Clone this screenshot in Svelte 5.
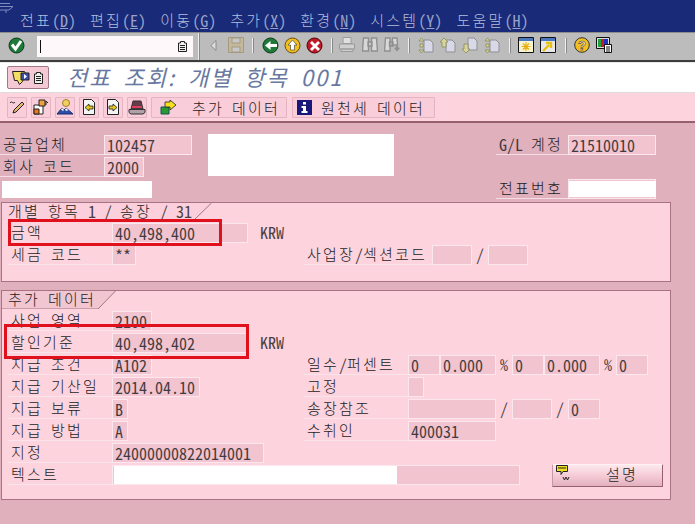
<script>
  const split = (s) => s.match(/[가-힣]+|[^가-힣]+/g) ?? [];
  const isKo = (r) => /[가-힣]/.test(r);

  const menu = [['전표', 'D'], ['편집', 'E'], ['이동', 'G'], ['추가', 'X'], ['환경', 'N'], ['시스템', 'Y'], ['도움말', 'H']];

  // c = column (8px units), w = span, r = row
  const top = [
    { t: 'l', x: '공급업체', c: 0, w: 13, r: 1 }, { t: 'f', x: '102457', c: 13, w: 11, r: 1 },
    { t: 'l', x: 'G/L 계정', c: 62, w: 9, r: 1 }, { t: 'f', x: '21510010', c: 71, w: 11, r: 1 },
    { t: 'l', x: '회사 코드', c: 0, w: 13, r: 2 }, { t: 'f', x: '2000', c: 13, w: 5, r: 2 },
    { t: 'l', x: '전표번호', c: 62, w: 9, r: 3 },
  ];
  const box1 = [
    { t: 'p', x: '금액', c: 1, w: 13, r: 1 }, { t: 'f', x: '40,498,400', c: 14, w: 17, r: 1 }, { t: 'u', x: 'KRW', c: 32, w: 4, r: 1 },
    { t: 'l', x: '세금 코드', c: 1, w: 13, r: 2 }, { t: 'f', x: '**', c: 14, w: 3, r: 2 },
    { t: 'l', x: '사업장/섹션코드', c: 38, w: 16, r: 2 }, { t: 'f', x: '', c: 54, w: 5, r: 2 }, { t: 'u', x: '/', c: 59, w: 2, r: 2 }, { t: 'f', x: '', c: 61, w: 5, r: 2 },
  ];
  const box2 = [
    { t: 'l', x: '사업 영역', c: 1, w: 13, r: 1 }, { t: 'f', x: '2100', c: 14, w: 5, r: 1 },
    { t: 'l', x: '할인기준', c: 1, w: 13, r: 2 }, { t: 'f', x: '40,498,402', c: 14, w: 17, r: 2 }, { t: 'u', x: 'KRW', c: 32, w: 4, r: 2 },
    { t: 'l', x: '지급 조건', c: 1, w: 13, r: 3 }, { t: 'f', x: 'A102', c: 14, w: 5, r: 3 },
    { t: 'l', x: '일수/퍼센트', c: 38, w: 13, r: 3 }, { t: 'f', x: '0', c: 51, w: 4, r: 3 }, { t: 'f', x: '0.000', c: 55, w: 7, r: 3 }, { t: 'u', x: '%', c: 62, w: 2, r: 3 },
    { t: 'f', x: '0', c: 64, w: 4, r: 3 }, { t: 'f', x: '0.000', c: 68, w: 7, r: 3 }, { t: 'u', x: '%', c: 75, w: 2, r: 3 }, { t: 'f', x: '0', c: 77, w: 4, r: 3 },
    { t: 'l', x: '지급 기산일', c: 1, w: 13, r: 4 }, { t: 'f', x: '2014.04.10', c: 14, w: 11, r: 4 },
    { t: 'l', x: '고정', c: 38, w: 13, r: 4 }, { t: 'f', x: '', c: 51, w: 2, r: 4 },
    { t: 'l', x: '지급 보류', c: 1, w: 13, r: 5 }, { t: 'f', x: 'B', c: 14, w: 2, r: 5 },
    { t: 'l', x: '송장참조', c: 38, w: 13, r: 5 }, { t: 'f', x: '', c: 51, w: 11, r: 5 }, { t: 'u', x: '/', c: 62, w: 2, r: 5 }, { t: 'f', x: '', c: 64, w: 5, r: 5 }, { t: 'u', x: '/', c: 69, w: 2, r: 5 }, { t: 'f', x: '0', c: 71, w: 4, r: 5 },
    { t: 'l', x: '지급 방법', c: 1, w: 13, r: 6 }, { t: 'f', x: 'A', c: 14, w: 2, r: 6 },
    { t: 'l', x: '수취인', c: 38, w: 13, r: 6 }, { t: 'f', x: '400031', c: 51, w: 11, r: 6 },
    { t: 'l', x: '지정', c: 1, w: 13, r: 7 }, { t: 'f', x: '24000000822014001', c: 14, w: 19, r: 7 },
    { t: 'l', x: '텍스트', c: 1, w: 13, r: 8 }, { t: 'f', x: '', c: 14, w: 51, r: 8 },
  ];
  const place = (it) => `grid-column:${it.c + 1}/span ${it.w};grid-row:${it.r}`;
</script>

{#snippet txt(s)}{#each split(s) as r}<span class={isKo(r) ? 'ko' : 'la'}>{r}</span>{/each}{/snippet}

{#snippet cells(list)}
  {#each list as it}
    <div class={it.t === 'l' ? 'label' : it.t === 'p' ? 'plain' : it.t === 'f' ? 'field' : 'unit'} style={place(it)}>{@render txt(it.x)}</div>
  {/each}
{/snippet}

<div class="app">
  <header class="menubar">
    <svg class="winicon" width="16" height="12" viewBox="0 0 16 12"><path d="M0 1.500H10M0 4.500H13L9 8H0M6 8V11" fill="none" stroke="#7f8cc0"/></svg>
    <nav class="menus">
      {#each menu as [k, h]}
        <span class="menu"><span class="ko">{k}</span><span class="la">(</span><span class="la und">{h}</span><span class="la">)</span></span>
      {/each}
    </nav>
  </header>

  <div class="systool">
    <svg class="ic" width="17" height="17" viewBox="0 0 17 17"><circle cx="8.500" cy="8.500" r="7.500" fill="#1f7a3a" stroke="#0c3a1a"/><path d="M4 7.500l3.500 4.500 5.500-8" fill="none" stroke="#fff" stroke-width="3"/></svg>
    <div class="cmd">
      <span class="caret"></span>
      <svg width="9" height="11" viewBox="0 0 9 11"><path d="M2.500.5h4v1.500h2v8.500H.5V2h2z" fill="#eee" stroke="#222"/><path d="M2 4.500h5M2 6.500h5M2 8.500h5" stroke="#222"/></svg>
    </div>
    <i class="sep s1"></i>
    <svg class="g1" width="7" height="11" viewBox="0 0 7 11"><path d="M6 .5v10L.8 5.500z" fill="#ddd" stroke="#8a8a8a"/></svg>
    <svg class="g2" width="16" height="16" viewBox="0 0 16 16"><path d="M.5.5h15v15H.5z" fill="#c4b89c" stroke="#a49a82"/><path d="M4 1h8v5H4zM4 10h8v5H4z" fill="#c8c8c8" stroke="#a49a82"/></svg>
    <i class="sep s2"></i>
    <svg class="g3" width="17" height="17" viewBox="0 0 17 17"><circle cx="8.500" cy="8.500" r="7.500" fill="#1f7a3a" stroke="#0c3a1a"/><path d="M3 8.500L8.500 4v3H15v3H8.500v3z" fill="#fff"/></svg>
    <svg class="g4" width="17" height="17" viewBox="0 0 17 17"><circle cx="8.500" cy="8.500" r="7.500" fill="#f0c020" stroke="#6a4a08"/><path d="M8.500 3L13 8h-2.500v5h-4V8H4z" fill="#fff" stroke="#333" stroke-width=".6"/></svg>
    <svg class="g5" width="17" height="17" viewBox="0 0 17 17"><circle cx="8.500" cy="8.500" r="7.500" fill="#c01a2a" stroke="#500"/><path d="M5 5l8 8M13 5l-8 8" stroke="#fff" stroke-width="2.800"/></svg>
    <i class="sep s3"></i>
    <svg class="g6" width="16" height="15" viewBox="0 0 16 15"><path d="M4 .5h8v6H4z" fill="#e0e0e0" stroke="#9a9a9a"/><path d="M.5 7h15v5H.5zM2 12h12v2.500H2z" fill="#cfcfcf" stroke="#9a9a9a"/></svg>
    <svg class="g7" width="16" height="15" viewBox="0 0 16 15"><path d="M1.500 1h5v13h-6zM9.500 1h5l1 13h-6zM6 5h4v4H6z" fill="#d8d8d8" stroke="#8f8f8f" stroke-width="1.400"/></svg>
    <svg class="g8" width="17" height="15" viewBox="0 0 17 15"><path d="M1.500 1h4.500v13H.5zM8.500 1H13l.5 7H8zM5.500 5h3.500v4H5.500z" fill="#d8d8d8" stroke="#8f8f8f" stroke-width="1.400"/><path d="M13 9v5M10.500 11.500h5" stroke="#8f8f8f" stroke-width="2"/></svg>
    <i class="sep s4"></i>
    <svg class="g9" width="16" height="17" viewBox="0 0 16 17"><path d="M6 3h6l3 3v9H6z" fill="#d8d8e8" stroke="#8f8f8f"/><path d="M3.500 1L6 4H1zM3.500 16L6 13H1zM2 7h3v3H2z" fill="#d8d49c" stroke="#8a8a5a" stroke-width=".8"/></svg>
    <svg class="g10" width="16" height="17" viewBox="0 0 16 17"><path d="M6 3h6l3 3v9H6z" fill="#d8d8e8" stroke="#8f8f8f"/><path d="M4 1L8 5H6v5H2V5H0z" fill="#d8d49c" stroke="#8a8a5a" stroke-width=".8"/></svg>
    <svg class="g11" width="16" height="17" viewBox="0 0 16 17"><path d="M6 1h6l3 3v9H6z" fill="#d8d8e8" stroke="#8f8f8f"/><path d="M4 16L8 12H6V7H2v5H0z" fill="#d8d49c" stroke="#8a8a5a" stroke-width=".8"/></svg>
    <svg class="g12" width="16" height="17" viewBox="0 0 16 17"><path d="M6 3h6l3 3v9H6z" fill="#d8d8e8" stroke="#8f8f8f"/><path d="M3.500 1L6 4H1zM3.500 16L6 13H1zM2 7h3v3H2z" fill="#d8d49c" stroke="#8a8a5a" stroke-width=".8"/></svg>
    <i class="sep s5"></i>
    <svg class="g13" width="16" height="16" viewBox="0 0 16 16"><path d="M.5.5h15v15H.5z" fill="#f8f4d0" stroke="#111"/><path d="M1 1h14v3H1z" fill="#4a78c0"/><path d="M8 5v9M3.500 9.500h9M5 6.500l6 6M11 6.500l-6 6" stroke="#e8b010" stroke-width="1.200"/></svg>
    <svg class="g14" width="16" height="16" viewBox="0 0 16 16"><path d="M.5.5h15v15H.5z" fill="#e8e8e8" stroke="#111"/><path d="M1 1h14v3H1z" fill="#4a78c0"/><path d="M3 14l6-6M6 6h5v5" fill="none" stroke="#e8c010" stroke-width="2.400"/></svg>
    <i class="sep s6"></i>
    <svg class="g15" width="16" height="16" viewBox="0 0 16 16"><circle cx="8" cy="8" r="7.300" fill="#f0c020" stroke="#333"/><text x="8" y="13" class="q">?</text></svg>
    <svg class="g16" width="16" height="16" viewBox="0 0 16 16"><path d="M.5.500h13v11H.5z" fill="#ddd" stroke="#111"/><path d="M2 2h3v8H2z" fill="#20a040"/><path d="M5 2h3v8H5z" fill="#c02020"/><path d="M8 2h4v8H8z" fill="#2030c0"/><path d="M8.500 7.500h7v8h-7z" fill="#fff" stroke="#111"/><path d="M10 10h4M10 12h4M10 14h4" stroke="#111"/></svg>
  </div>

  <div class="titlebar">
    <button class="tbtn" aria-label="메뉴">
      <svg width="18" height="16" viewBox="0 0 18 16"><path d="M.5 1.500h12l2 4-2 1-2 5-3 3-2-4h-3z" fill="#f4e060" stroke="#222"/><path d="M9 3h8v7H9z" fill="#3a50b0" stroke="#222"/><path d="M12 4l3 2.500-3 2.500z" fill="#fff"/></svg>
      <svg width="9" height="12" viewBox="0 0 9 12"><path d="M2.500.5h4v1.500h2v9.500H.5V2h2z" fill="#eee" stroke="#222"/><path d="M2 4.500h5M2 6.500h5M2 8.500h5" stroke="#222"/></svg>
    </button>
    <h1 class="title">전표 조회: 개별 항목 001</h1>
  </div>

  <div class="apptool">
    <button class="ib" aria-label="수정"><svg width="16" height="16" viewBox="0 0 16 16"><path d="M1 4c2-3 3 2 5-1" fill="none" stroke="#222"/><path d="M4 14l1-3 8-8 2 2-8 8z" fill="#e8b878" stroke="#222"/></svg></button>
    <button class="ib" aria-label="개요"><svg width="16" height="16" viewBox="0 0 16 16"><path d="M1 6h9v9H1z" fill="#fff" stroke="#222"/><path d="M1 10h5v5H1z" fill="#e87818" stroke="#222"/><path d="M6 1h6v6H6z" fill="#f0a040" stroke="#222"/><path d="M13 6V2l2 2" fill="none" stroke="#222"/></svg></button>
    <button class="ib" aria-label="담당자"><svg width="18" height="16" viewBox="0 0 18 16"><circle cx="10" cy="4" r="3.500" fill="#f0d060" stroke="#a08020"/><path d="M1 15l5-6 2 2 2-2 7 6z" fill="#2a50a8" stroke="#182a70"/><path d="M5 10.500l1-1.500 2 2-1 1zM10 9l2 2-1 1-2-1z" fill="#fff"/></svg></button>
    <button class="ib" aria-label="이전"><svg width="14" height="16" viewBox="0 0 14 16"><path d="M1.500.5h8l3 3v12h-11z" fill="#f4f4f4" stroke="#222"/><path d="M3 8.500l4-3.500v2h4v3H7v2z" fill="#e8c820" stroke="#222" stroke-width=".8"/></svg></button>
    <button class="ib" aria-label="다음"><svg width="14" height="16" viewBox="0 0 14 16"><path d="M1.500.5h8l3 3v12h-11z" fill="#f4f4f4" stroke="#222"/><path d="M11 8.500L7 5v2H3v3h4v2z" fill="#e8c820" stroke="#222" stroke-width=".8"/></svg></button>
    <button class="ib" aria-label="출력"><svg width="18" height="16" viewBox="0 0 18 16"><path d="M5 2h8l2 8H3z" fill="#6a3a4a" stroke="#333"/><path d="M4 7h10v2H4z" fill="#d84060"/><path d="M1 10.500h16v3l-2 1.500H3l-2-1.500z" fill="#b0a0a8" stroke="#333"/></svg></button>
    <button class="tb w1">
      <svg width="16" height="15" viewBox="0 0 16 15"><path d="M1 7h8v7H1z" fill="#2a9a30" stroke="#155"/><path d="M5 2h5V0l6 5-6 5V7H5z" fill="#f4e020" stroke="#222" stroke-width=".8"/></svg>
      <span class="btxt">{@render txt('추가 데이터')}</span>
    </button>
    <button class="tb w2">
      <svg width="15" height="15" viewBox="0 0 15 15"><path d="M0 0h15v15H0z" fill="#18187a"/><path d="M6 2h3v2.500H6zM4.500 6h4.500v5h1.500v2h-6v-2H6V8H4.500z" fill="#fff"/></svg>
      <span class="btxt second">{@render txt('원천세 데이터')}</span>
    </button>
  </div>

  <main class="content">
    <div class="grid top">
      {@render cells(top)}
      <div class="blank bigblank"></div>
      <div class="blank strip"></div>
      <div class="field docno"><span></span></div>
    </div>

    <section class="box first">
      <div class="tab">
        <svg class="tabshape" width="210" height="17" viewBox="0 0 210 17"><path d="M0 0H209.500L192 17H0z" fill="#fbd0dc"/><path d="M209.500 0L192 17" stroke="#a87485" fill="none"/></svg>
        <span class="tabtxt">{@render txt('개별 항목 1 / 송장 / 31')}</span>
      </div>
      <div class="grid inner">{@render cells(box1)}</div>
    </section>

    <section class="box last">
      <div class="tab">
        <svg class="tabshape" width="114" height="18" viewBox="0 0 114 18"><path d="M0 0H113.500L96 18H0z" fill="#f2c6d1"/><path d="M113.500 0L96 18H0" stroke="#a87485" fill="none"/></svg>
        <span class="tabtxt">{@render txt('추가 데이터')}</span>
      </div>
      <div class="grid inner">
        {@render cells(box2)}
        <div class="whitefill"></div>
      </div>
      <button class="explain">
        <svg width="17" height="16" viewBox="0 0 17 16"><path d="M.5.500h11v6H7l-2 3v-3H.5z" fill="#f0e020" stroke="#222"/><path d="M2 3h8" stroke="#222"/><path d="M7 12l1.500 3 1.500-3 1.500 3 1.500-3" fill="none" stroke="#222"/></svg>
        <span class="etxt">{@render txt('설명')}</span>
      </button>
    </section>

    <div class="mark m1"></div>
    <div class="mark m2"></div>
  </main>
</div>

<style>
  :global(body) { margin: 0; background: #e0b0bd; }
  .app {
    width: 695px; height: 524px; overflow: hidden; display: flex; flex-direction: column;
    font-family: "Noto Sans Mono CJK KR", "Liberation Mono", monospace; font-size: 16px; color: #1c1c1c;
  }
  .ko { font-family: "Noto Sans CJK KR", sans-serif; font-size: 15px; letter-spacing: 2.2px; font-weight: 300; vertical-align: 1px; }
  .la { font-family: "Noto Sans Mono CJK KR", "Liberation Mono", monospace; font-size: 16px; font-weight: 400; opacity: .82; }

  .menubar { height: 32px; background: #182a78; position: relative; box-sizing: border-box; color: #b4bedc; }
  .winicon { position: absolute; left: 0; top: 2px; }
  .menus { display: flex; gap: 14px; padding: 10px 0 0 20px; line-height: 20px; height: 21px; white-space: nowrap; }
  .menu { display: inline-block; }
  .und { text-decoration: underline; }

  .systool { background: #bcbcbc; border-top: 1px solid #8e8e8e; border-bottom: 2px solid #3c3c3c; position: relative; height: 27px; display: flex; align-items: center; }
  .systool > svg { position: absolute; top: 4px; }
  .systool > svg.ic { left: 8px; }
  .cmd { position: absolute; left: 37px; top: 3px; width: 156px; height: 21px; background: #fff8fa; display: flex; align-items: center; justify-content: flex-end; padding-right: 6px; box-sizing: border-box; }
  .caret { position: absolute; left: 3px; top: 4px; width: 1px; height: 13px; background: #111; }
  .sep { position: absolute; top: 5px; height: 15px; width: 1px; background: #eee; border-right: 1px solid #888; }
  .s1 { left: 198px; top: 0; height: 27px; } .s2 { left: 252px; } .s3 { left: 331px; } .s4 { left: 408px; } .s5 { left: 509px; } .s6 { left: 565px; }
  .systool > svg.g1 { left: 210px; top: 7px; } .g2 { left: 228px; } .g3 { left: 262px; } .g4 { left: 284px; } .g5 { left: 306px; }
  .g6 { left: 339px; } .g7 { left: 362px; } .g8 { left: 384px; }
  .g9 { left: 418px; } .g10 { left: 440px; } .g11 { left: 462px; } .g12 { left: 484px; }
  .g13 { left: 518px; } .g14 { left: 540px; } .g15 { left: 574px; } .g16 { left: 596px; }
  .q { font: bold 13px "Liberation Sans", sans-serif; text-anchor: middle; fill: #fff; stroke: #222; stroke-width: .5px; }

  .titlebar { background: #fff; border-top: 1px solid #e8e8e8; border-bottom: 1px solid #ddd; box-sizing: border-box; height: 31px; display: flex; align-items: center; padding-left: 7px; }
  .tbtn { width: 42px; height: 23px; background: #f4c8d4; border: 1px solid #a07888; border-radius: 2px; padding: 0 0 0 4px; display: flex; align-items: center; gap: 4px; }
  .title { margin: -4px 0 0 18px; font: italic 400 22px "Noto Sans CJK KR", sans-serif; color: #6878a0; white-space: nowrap; letter-spacing: 2px; word-spacing: 5px; line-height: 30px; }

  .apptool { background: #fdd3de; border-bottom: 2px solid #96606f; height: 28px; display: flex; align-items: center; padding-left: 7px; gap: 4px; }
  .ib, .tb { height: 21px; box-sizing: border-box; background: #f9cdd9; border: 1px solid #e4b4c2; padding: 0; display: flex; align-items: center; justify-content: center; border-radius: 1px; color: #1c1c1c; font: inherit; }
  .ib { width: 20px; }
  .tb { justify-content: flex-start; padding-left: 8px; }
  .tb.w1 { width: 136px; } .tb.w2 { width: 143px; margin-left: 1px; padding-left: 4px; }
  .btxt { margin-left: 16px; white-space: nowrap; line-height: 21px; padding-top: 1px; }
  .btxt.second { margin-left: 9px; }

  .content { position: relative; flex: 1; padding-top: 12px; background: #e0b0bd; }
  .grid { display: grid; grid-template-columns: repeat(86, 8px); grid-auto-rows: 20px; row-gap: 2px; }
  .top { height: 64px; }
  .label, .plain, .unit, .field { box-sizing: border-box; height: 20px; line-height: 18px; white-space: nowrap; }
  .label { border-bottom: 1px solid #f8e4ea; padding-left: 3px; }
  .plain { padding-left: 3px; }
  .unit { padding-left: 4px; }
  .field { border: 1px solid #fbe8ee; background: #f2c4cf; padding-left: 2px; }
  .top .label { border-bottom-color: #f4dde4; }
  .blank { background: #fff; }
  .bigblank { grid-column: 27 / span 23; grid-row: 1 / span 2; margin: -1px 0; width: 186px; height: 42px; }
  .strip { grid-column: 1 / span 19; grid-row: 3; width: 150px; height: 17px; margin: 2px 0 0 2px; }
  .docno { grid-column: 72 / span 11; grid-row: 3; position: relative; padding: 0; }
  .docno span { position: absolute; left: 0; top: 1px; width: 87px; height: 16px; background: #fff; }

  .box { margin-left: 1px; width: 670px; box-sizing: border-box; border: 1px solid #a87485; background: #fdd3de; position: relative; }
  .first { height: 80px; margin-top: 3px; }
  .last { height: 210px; margin-top: 8px; }
  .tab { position: relative; height: 20px; }
  .tabshape { position: absolute; left: 0; top: 0; }
  .tabtxt { position: absolute; left: 6px; top: -1px; line-height: 17px; white-space: nowrap; }
  .inner { margin-left: -2px; }
  .whitefill { grid-column: 15 / span 36; grid-row: 8; background: #fff; margin: 1px 0 1px 2px; width: 283px; height: 18px; }
  .explain { position: absolute; left: 550px; top: 173px; width: 111px; height: 23px; box-sizing: border-box; border: 1px solid #96606f; border-top-color: #fff2f5; border-left-color: #c49aa6; border-radius: 1px; padding: 0 0 0 3px; background: linear-gradient(#fde8ee, #f4c9d4 55%, #e2b0be); display: flex; align-items: flex-start; font: inherit; color: #1c1c1c; }
  .etxt { margin-left: 33px; line-height: 18px; }

  .mark { position: absolute; border: 3px solid #e0101c; box-sizing: border-box; }
  .m1 { left: 8px; top: 96px; width: 214px; height: 27px; }
  .m2 { left: 4px; top: 201px; width: 245px; height: 35px; }
</style>
